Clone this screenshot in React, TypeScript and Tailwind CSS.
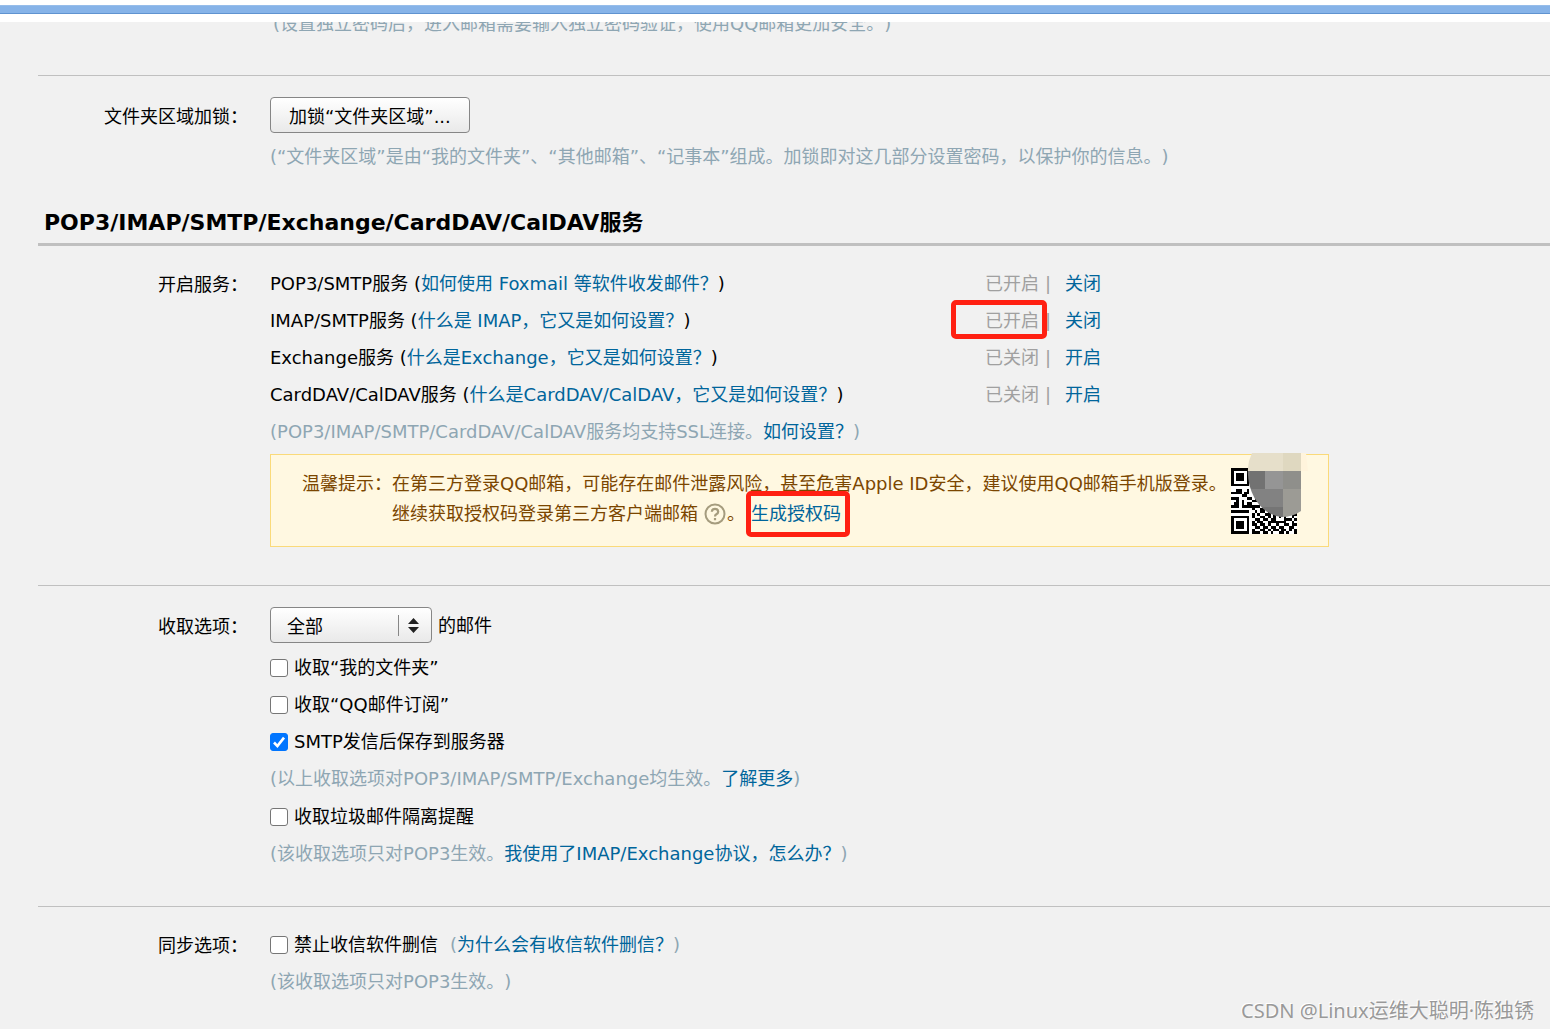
import type { ReactNode } from "react";

const services = [
  { name: "POP3/SMTP服务", help: "如何使用 Foxmail 等软件收发邮件？", enabled: true },
  { name: "IMAP/SMTP服务", help: "什么是 IMAP，它又是如何设置？", enabled: true, marked: true },
  { name: "Exchange服务", help: "什么是Exchange，它又是如何设置？", enabled: false },
  { name: "CardDAV/CalDAV服务", help: "什么是CardDAV/CalDAV，它又是如何设置？", enabled: false },
];

const qrRows = [
  "1111111010011010101111111",
  "1000001001100101101000001",
  "1011101011010010101011101",
  "1011101010101101001011101",
  "1011101000110011001011101",
  "1000001011001010101000001",
  "1111111010101010101111111",
  "0000000010110110100000000",
  "0011001010100111010110010",
  "1111011001101100101101010",
  "0000110000110011011001101",
  "1110001101010110100110010",
  "0010100011101001011011001",
  "0110101100010110110100110",
  "1110111111101100011011010",
  "0000000010011011010110100",
  "1111111001011010111110110",
  "0000000010100110100011011",
  "1111111010011010101010010",
  "1000001001101101100011101",
  "1011101010110011111110010",
  "1011101011011010010011011",
  "1011101001101101101100110",
  "1000001010011010110110101",
  "1111111011101101001101001",
];

function Link({ children }: { children: ReactNode }) {
  return (
    <a href="#" className="text-[#00659b] hover:underline">
      {children}
    </a>
  );
}

function Hint({ children }: { children: ReactNode }) {
  return <p className="leading-[38px] text-[#8ea6b3]">{children}</p>;
}

function Row({ label, children }: { label: string; children: ReactNode }) {
  return (
    <div className="flex gap-[22px]">
      <div className="w-[210px] shrink-0 pt-[2px] text-right leading-[36px]">{label}</div>
      <div className="min-w-0 flex-1">{children}</div>
    </div>
  );
}

function Check({ label, checked, children }: { label: string; checked?: boolean; children?: ReactNode }) {
  return (
    <div className="flex h-[37px] items-center">
      <label className="flex items-center gap-[6px]">
        <input
          type="checkbox"
          defaultChecked={checked}
          className="peer size-[18px] appearance-none rounded-[3px] border border-[#767676] bg-white checked:border-[#0075ff] checked:bg-[#0075ff]"
        />
        <svg viewBox="0 0 18 18" className="pointer-events-none -ml-[24px] hidden size-[18px] peer-checked:block">
          <path d="M4 9.5l3.4 3.6L14 4.6" fill="none" stroke="#fff" strokeWidth="2.6" />
        </svg>
        <span>{label}</span>
      </label>
      {children}
    </div>
  );
}

function QrCode() {
  return (
    <svg
      viewBox="0 2 72 80"
      className="h-[80px] w-[72px] shrink-0 overflow-visible"
      role="img"
      aria-label="QQ邮箱手机版"
    >
      <rect x="0" y="15" width="66" height="66" fill="#fff" />
      <g transform="translate(0 15) scale(2.64)" shapeRendering="crispEdges">
        {qrRows.map((row, y) =>
          row.split("").map((cell, x) =>
            cell === "1" ? <rect key={`${x}-${y}`} x={x} y={y} width="1" height="1" fill="#000" /> : null
          )
        )}
      </g>
      <clipPath id="blot">
        <path d="M21 0H70V58Q62 64 50 64Q34 62 24 46Q14 28 18 8Z" />
      </clipPath>
      <path d="M70 0H75L77 18H70Z" fill="#fff4dc" />
      <g clipPath="url(#blot)" shapeRendering="crispEdges">
        <rect x="16" y="0" width="36" height="18" fill="#e6dfca" />
        <rect x="52" y="0" width="18" height="18" fill="#dfd8c0" />
        <rect x="16" y="18" width="18" height="18" fill="#727272" />
        <rect x="34" y="18" width="18" height="18" fill="#959595" />
        <rect x="52" y="18" width="18" height="18" fill="#8f8f8b" />
        <rect x="16" y="36" width="36" height="18" fill="#828282" />
        <rect x="52" y="36" width="18" height="30" fill="#9c9b95" />
        <rect x="16" y="54" width="36" height="12" fill="#757575" />
      </g>
    </svg>
  );
}

export default function App() {
  return (
    <div className="min-h-screen bg-[#f1f1f1] font-['DejaVu_Sans','Noto_Sans_CJK_SC',sans-serif] text-[18px] text-black [text-spacing-trim:space-all]">
      <header className="h-[22px] bg-white pt-[5px]">
        <div className="h-[9px] border-y border-t-[#96bdea] border-b-[#5f93d0] bg-[#86b3e8]" />
      </header>

      <main className="relative overflow-hidden pl-[38px]">
        <div className="-mt-[17px] border-b border-[#c0c0c0] pb-[32px] pl-[235px]">
          <Hint>(设置独立密码后，进入邮箱需要输入独立密码验证，使用QQ邮箱更加安全。)</Hint>
        </div>

        <section className="pt-[21px]">
          <Row label="文件夹区域加锁：">
            <button className="mb-[5px] h-[36px] rounded-[4px] border border-[#868686] bg-linear-to-b from-white to-[#e9e9e9] px-[18px] pt-[3px]">
              加锁“文件夹区域”...
            </button>
            <Hint>(“文件夹区域”是由“我的文件夹”、“其他邮箱”、“记事本”组成。加锁即对这几部分设置密码，以保护你的信息。)</Hint>
          </Row>
        </section>

        <h2 className="mt-[30px] border-b-3 border-[#c0c0c0] pb-[3px] pl-[6px] text-[22px] leading-[34px] font-bold">
          POP3/IMAP/SMTP/Exchange/CardDAV/CalDAV服务
        </h2>

        <section className="border-b border-[#c0c0c0] pt-[19px] pb-[38px]">
          <Row label="开启服务：">
            {services.map((s) => (
              <div key={s.name} className="flex h-[37px] items-center whitespace-nowrap">
                <div className="w-[715px]">
                  {s.name} (<Link>{s.help}</Link>)
                </div>
                <div className="relative flex text-[#a0a0a0]">
                  <span className="w-[60px]">{s.enabled ? "已开启" : "已关闭"}</span>
                  <span className="w-[20px]">|</span>
                  <Link>{s.enabled ? "关闭" : "开启"}</Link>
                  {s.marked && (
                    <span className="absolute -top-[7px] -left-[34px] h-[39px] w-[96px] rounded-[5px] border-5 border-[#ff2012]" />
                  )}
                </div>
              </div>
            ))}
            <Hint>
              (POP3/IMAP/SMTP/CardDAV/CalDAV服务均支持SSL连接。<Link>如何设置？</Link>)
            </Hint>
            <div className="mt-[3px] flex h-[93px] w-[1059px] justify-between border border-[#fada7a] bg-[#fff8e1] pr-[25px] pl-[31px] whitespace-nowrap text-[#7b4600]">
              <div className="flex pt-[14px] leading-[30px]">
                <span className="w-[90px]">温馨提示：</span>
                <div>
                  <p>在第三方登录QQ邮箱，可能存在邮件泄露风险，甚至危害Apple ID安全，建议使用QQ邮箱手机版登录。</p>
                  <div className="flex items-center">
                    <span>继续获取授权码登录第三方客户端邮箱</span>
                    <svg viewBox="0 0 22 22" className="mr-px ml-[6px] size-[22px]" fill="none" stroke="#a59c7e">
                      <circle cx="11" cy="11" r="9.5" strokeWidth="2" />
                      <path d="M7.8 8.8Q8 5.8 11 5.8T14.2 8.7Q14.2 10.3 12.4 11.2Q11 12 11 13.5M11 15v2.2" strokeWidth="2.2" />
                    </svg>
                    <span className="w-[24px]">。</span>
                    <span className="relative">
                      <Link>生成授权码</Link>
                      <span className="absolute -top-[8px] -left-[5px] h-[46px] w-[104px] rounded-[5px] border-5 border-[#ff2012]" />
                    </span>
                  </div>
                </div>
              </div>
              <QrCode />
            </div>
          </Row>
        </section>

        <section className="border-b border-[#c0c0c0] pt-[21px] pb-[33px]">
          <Row label="收取选项：">
            <div className="mb-[6px] flex h-[36px] items-center gap-[6px]">
              <div className="relative">
                <select
                  aria-label="收取选项"
                  className="h-[36px] w-[162px] appearance-none rounded-[4px] border border-[#868686] bg-linear-to-b from-white to-[#e9e9e9] pt-[3px] pl-[16px]"
                >
                  <option>全部</option>
                </select>
                <svg viewBox="0 0 34 36" className="pointer-events-none absolute top-0 right-0 h-[36px] w-[34px]">
                  <path d="M0.5 8v21" stroke="#868686" />
                  <path d="M10 17l5.5-6 5.5 6zM10 20l5.5 6 5.5-6z" fill="#222" />
                </svg>
              </div>
              <span>的邮件</span>
            </div>
            <Check label="收取“我的文件夹”" />
            <Check label="收取“QQ邮件订阅”" />
            <Check label="SMTP发信后保存到服务器" checked />
            <Hint>
              (以上收取选项对POP3/IMAP/SMTP/Exchange均生效。<Link>了解更多</Link>)
            </Hint>
            <Check label="收取垃圾邮件隔离提醒" />
            <Hint>
              (该收取选项只对POP3生效。<Link>我使用了IMAP/Exchange协议，怎么办？</Link>)
            </Hint>
          </Row>
        </section>

        <section className="pt-[19px] pb-[28px]">
          <Row label="同步选项：">
            <Check label="禁止收信软件删信">
              <span className="ml-[12px] text-[#8ea6b3]">
                (<Link>为什么会有收信软件删信？</Link>)
              </span>
            </Check>
            <Hint>(该收取选项只对POP3生效。)</Hint>
          </Row>
        </section>

        <footer className="absolute right-[16px] bottom-[4px] font-['Noto_Sans','Noto_Sans_CJK_SC',sans-serif] text-[20px] leading-[28px] text-[#999] [text-shadow:-1px_-1px_0_#fff]">
          CSDN @Linux运维大聪明·陈独锈
        </footer>
      </main>
    </div>
  );
}
